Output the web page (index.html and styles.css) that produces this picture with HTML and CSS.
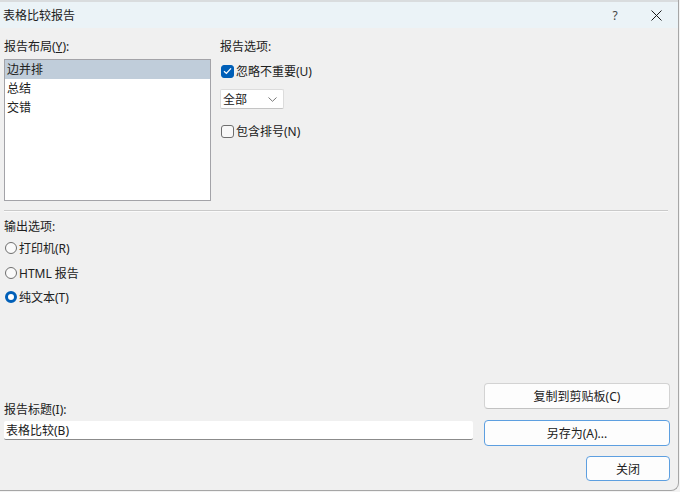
FILE: index.html
```html
<!DOCTYPE html>
<html lang="zh-CN">
<head>
<meta charset="utf-8">
<title>表格比较报告</title>
<link rel="stylesheet" href="styles.css">
</head>
<body>
<div class="window">
  <div class="topstrip"></div>
  <div class="titlebar">
    <span class="title t">表格比较报告</span>
    <span class="help t">?</span>
    <span class="close-x">
      <svg width="11" height="11" viewBox="0 0 11 11"><path d="M0.5 0.5 L10.5 10.5 M10.5 0.5 L0.5 10.5" stroke="#1a1a1a" stroke-width="1" fill="none"/></svg>
    </span>
  </div>
  <div class="content">
    <div class="top">
      <div class="layout-col">
        <div class="label">报告布局(<u>Y</u>):</div>
        <div class="listbox">
          <div class="item selected">边并排</div>
          <div class="item">总结</div>
          <div class="item">交错</div>
        </div>
      </div>
      <div class="options-col">
        <div class="label">报告选项:</div>
        <div class="check-row first">
          <span class="checkbox checked">
            <svg width="9" height="8" viewBox="0 0 9 8"><path d="M1 4.2 L3.4 6.4 L8 1.4" stroke="#fff" stroke-width="1.3" fill="none"/></svg>
          </span>
          <span class="t">忽略不重要(U)</span>
        </div>
        <div class="select">
          <span class="t">全部</span>
          <svg width="9" height="5" viewBox="0 0 9 5"><path d="M0.5 0.5 L4.5 4.3 L8.5 0.5" stroke="#777" stroke-width="1" fill="none"/></svg>
        </div>
        <div class="check-row second">
          <span class="checkbox"></span>
          <span class="t">包含排号(N)</span>
        </div>
      </div>
    </div>
    <div class="separator"></div>
    <div class="output">
      <div class="label">输出选项:</div>
      <div class="radio-row r1"><span class="radio"></span><span class="t">打印机(R)</span></div>
      <div class="radio-row r2"><span class="radio"></span><span class="t">HTML 报告</span></div>
      <div class="radio-row r3"><span class="radio checked"></span><span class="t">纯文本(T)</span></div>
    </div>
    <div class="bottom">
      <div class="title-col">
        <div class="label">报告标题(I):</div>
        <div class="textbox">表格比较(B)</div>
      </div>
      <div class="buttons">
        <div class="btn"><span class="t">复制到剪贴板(C)</span></div>
        <div class="btn default"><span class="t">另存为(A)...</span></div>
        <div class="btn default close"><span class="t">关闭</span></div>
      </div>
    </div>
  </div>
</div>
</body>
</html>
```

FILE: styles.css
```css
* { box-sizing: border-box; }
html, body { margin: 0; padding: 0; background: #f3f3f3; }
body {
  font-family: "Noto Sans", "Noto Sans CJK SC", sans-serif;
  font-size: 12px;
  line-height: 16px;
  color: #202020;
}
.t { padding-top: 2px; }
.window {
  width: 679px;
  height: 491px;
  background: #f0f0f0;
  border-right: 1px solid #a6a6a6;
  border-bottom: 1px solid #a6a6a6;
  border-bottom-right-radius: 8px;
  display: flex;
  flex-direction: column;
  overflow: hidden;
}
.topstrip {
  height: 2px;
  background: #d9dcde;
}
.titlebar {
  height: 26px;
  background: #ebf3f7;
  display: flex;
  align-items: center;
  padding-left: 3px;
}
.title { flex: 1; }
.help { width: 12px; text-align: center; margin-right: 30px; color: #444; }
.close-x { display: flex; margin-right: 16px; }
.content {
  flex: 1;
  display: flex;
  flex-direction: column;
}
.top {
  display: flex;
  padding: 10px 0 0 4px;
}
.layout-col { width: 207px; }
.label { height: 16px; padding-top: 1px; line-height: 16px; white-space: nowrap; }
.listbox {
  margin-top: 5px;
  height: 142px;
  background: #fff;
  border: 1px solid #a3a3a8;
}
.item {
  height: 19px;
  line-height: 19px;
  padding-left: 2px;
}
.item.selected { background: #c0cdda; }
.options-col { margin-left: 9px; }
.check-row {
  display: flex;
  align-items: center;
  height: 16px;
  margin-left: 1px;
}
.check-row.first { margin-top: 9px; }
.check-row.second { margin-top: 14px; }
.checkbox {
  width: 13px;
  height: 13px;
  border: 1px solid #6f6f6f;
  border-radius: 3px;
  background: #f8f8f8;
  margin-right: 2px;
  display: flex;
  align-items: center;
  justify-content: center;
}
.checkbox.checked { background: #005fb8; border-color: #005fb8; }
.select {
  margin-top: 10px;
  width: 64px;
  height: 20px;
  background: #fff;
  border: 1px solid #dcdcdc;
  border-bottom-color: #c4c4c4;
  border-radius: 2px;
  display: flex;
  align-items: center;
  justify-content: space-between;
  padding: 0 6px 0 2px;
}
.separator {
  margin: 9px 10px 0 4px;
  height: 2px;
  border-top: 1px solid #cacaca;
  border-bottom: 1px solid #fafafa;
}
.output { padding: 6px 0 0 4px; }
.radio-row { display: flex; align-items: center; height: 16px; margin-left: 1px; }
.r1 { margin-top: 6px; }
.r2 { margin-top: 9px; }
.r3 { margin-top: 8px; }
.radio {
  width: 12px;
  height: 12px;
  border: 1px solid #6f6f6f;
  border-radius: 50%;
  background: #fafafa;
  margin-right: 2px;
}
.radio.checked {
  border: 3.5px solid #005fb8;
  background: #fff;
}
.bottom {
  margin-top: auto;
  padding: 0 0 9px 4px;
  display: flex;
  align-items: flex-start;
}
.title-col { width: 469px; margin-top: 18px; }
.textbox {
  margin-top: 4px;
  height: 19px;
  background: #fff;
  border-bottom: 1px solid #8b8b8b;
  border-radius: 2px;
  padding: 1px 0 0 2px;
  line-height: 17px;
}
.buttons {
  margin-left: 11px;
  width: 186px;
  display: flex;
  flex-direction: column;
  align-items: flex-end;
}
.btn {
  width: 186px;
  height: 26px;
  background: #fdfdfd;
  border: 1px solid #d3d3d3;
  border-bottom-color: #c2c2c2;
  border-radius: 4px;
  display: flex;
  align-items: center;
  justify-content: center;
}
.btn + .btn { margin-top: 11px; }
.btn.default { border-color: #5d9fe0; }
.btn.close { width: 84px; height: 25px; margin-top: 10px; }
```
